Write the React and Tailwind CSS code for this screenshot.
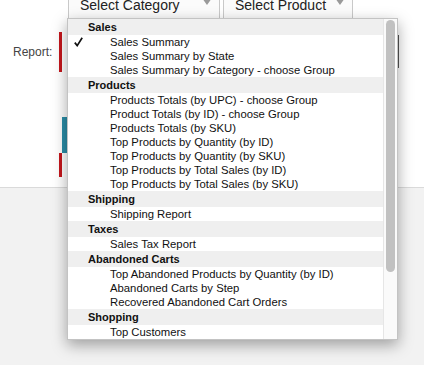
import React from 'react';

const groups = [
  { title: 'Sales', items: ['Sales Summary', 'Sales Summary by State', 'Sales Summary by Category - choose Group'] },
  {
    title: 'Products',
    items: [
      'Products Totals (by UPC) - choose Group',
      'Product Totals (by ID) - choose Group',
      'Products Totals (by SKU)',
      'Top Products by Quantity (by ID)',
      'Top Products by Quantity (by SKU)',
      'Top Products by Total Sales (by ID)',
      'Top Products by Total Sales (by SKU)',
    ],
  },
  { title: 'Shipping', items: ['Shipping Report'] },
  { title: 'Taxes', items: ['Sales Tax Report'] },
  {
    title: 'Abandoned Carts',
    items: ['Top Abandoned Products by Quantity (by ID)', 'Abandoned Carts by Step', 'Recovered Abandoned Cart Orders'],
  },
  { title: 'Shopping', items: ['Top Customers'] },
];

function Caret() {
  return (
    <svg width="10" height="8" viewBox="0 0 10 8" className="shrink-0">
      <polygon points="0,0 10,0 5,7" fill="#9a9a9a" />
    </svg>
  );
}

function FakeSelect({ label, width }) {
  return (
    <div
      className={`flex h-[24px] items-end justify-between border-x border-[#c9c9c9] bg-[#fbfbfb] pl-[11px] pr-[7px] pb-[5px] ${width}`}
    >
      <span className="text-[14px] leading-[16px] text-[#222]">{label}</span>
      <div className="mb-[7px]">
        <Caret />
      </div>
    </div>
  );
}

function Check() {
  return (
    <svg width="9" height="10" viewBox="0 0 9 10">
      <path d="M0.8 5.6 L3.2 8.6 L8.2 0.8" fill="none" stroke="#111" strokeWidth="1.7" />
    </svg>
  );
}

export default function App() {
  return (
    <div
      className="relative h-[365px] w-[424px] overflow-hidden bg-white"
      style={{ fontFamily: '"Liberation Sans", Arial, sans-serif' }}
    >
      {/* page */}
      <div className="flex h-[187px] flex-col">
        <div className="-mt-[6px] flex gap-[3px] pl-[68px]">
          <FakeSelect label="Select Category" width="w-[152px]" />
          <FakeSelect label="Select Product" width="w-[130px]" />
        </div>

        <div className="mt-[14px] flex">
          <div className="w-[59px] pl-[13px] pt-[13px] text-[12px] leading-[14px] text-[#444]">Report:</div>
          <div className="flex h-[40px] w-[340px] justify-end border-l-[3px] border-[#c4161c]">
            <div className="mt-[3px] h-[33px] w-px bg-[#555]" />
          </div>
        </div>

        <div className="ml-[62px] mt-[45px] h-[36px] w-[120px] bg-[#2b8ea8]" />
        <div className="ml-[59px] h-[24px] w-[340px] border-l-[3px] border-[#c4161c]" />
      </div>
      <div className="h-[178px] border-t border-[#dadada] bg-[#f2f2f2]" />

      {/* open dropdown */}
      <div className="absolute left-[67px] top-[18px] flex h-[322px] w-[331px] border border-[#c3c3c3] bg-white text-[11px] text-[#111] shadow-[0_5px_14px_rgba(0,0,0,0.35)]">
        <div className="w-[315px]">
          {groups.map((g) => (
            <div key={g.title}>
              <div className="h-[16px] bg-[#efefef] pl-[20px] font-bold leading-[16px]">{g.title}</div>
              {g.items.map((it) => (
                <div key={it} className="flex h-[14px] items-center text-[11.3px] leading-[14px]">
                  <span className="flex w-[42px] pl-[6px]">{it === 'Sales Summary' && <Check />}</span>
                  <span className="whitespace-nowrap">{it}</span>
                </div>
              ))}
            </div>
          ))}
        </div>
        <div className="flex-1 border-l border-[#e6e6e6] bg-[#fafafa] pt-[1px]">
          <div className="ml-[2px] h-[252px] w-[9px] rounded-full bg-[#c1c1c1]" />
        </div>
      </div>
    </div>
  );
}
